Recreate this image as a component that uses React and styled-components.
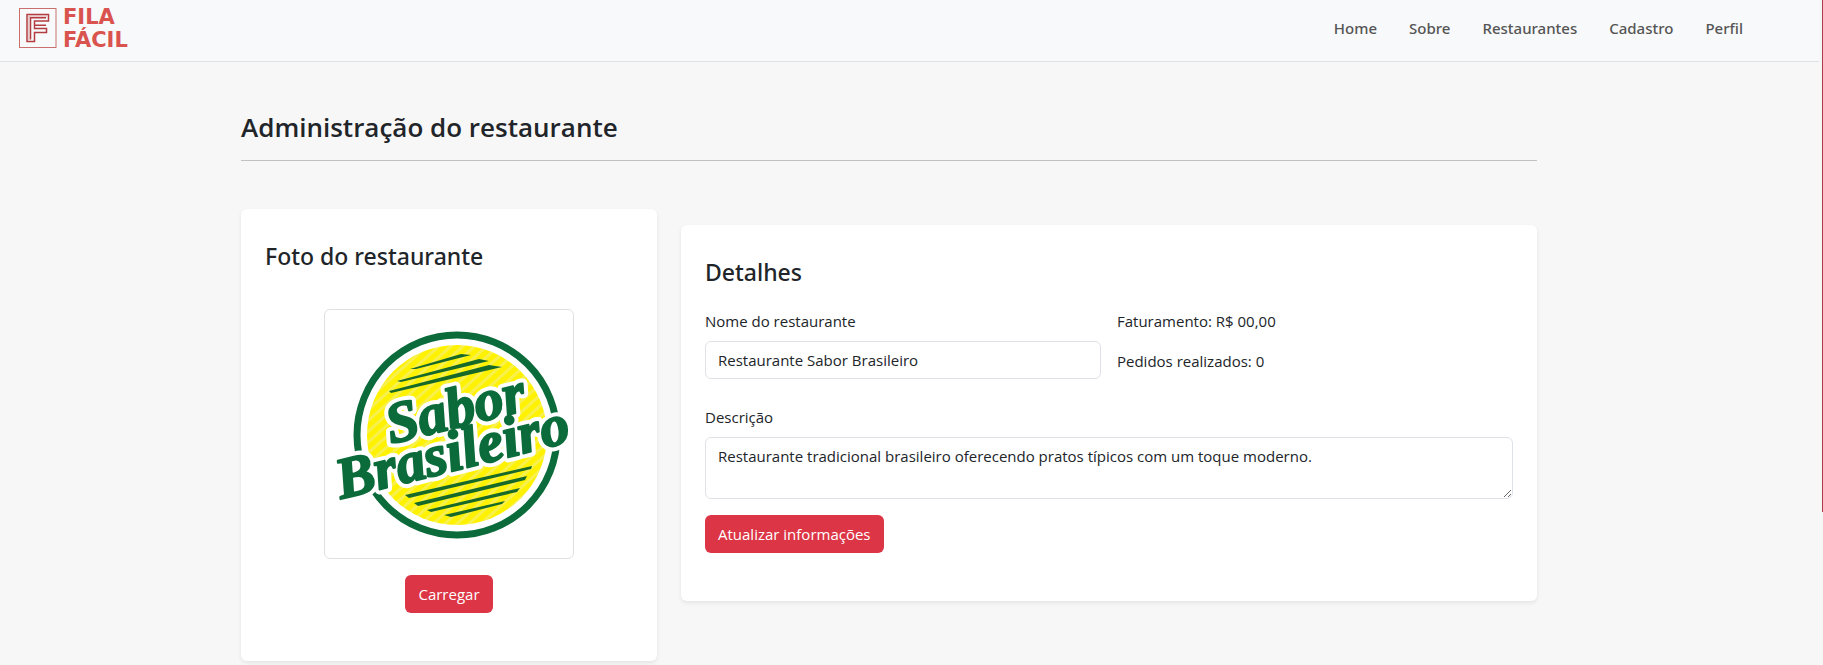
import React from "react";
import styled, { createGlobalStyle } from "styled-components";

const GlobalStyle = createGlobalStyle`
  *, *::before, *::after { box-sizing: border-box; }
  html { scrollbar-width: none; }
  body {
    margin: 0;
    background: #f7f7f7;
    color: #212529;
    font-family: "Open Sans", "Noto Sans", sans-serif;
    font-size: 15px;
    line-height: 24px;
  }
`;

const Page = styled.div`
  min-height: 100vh;
  padding-right: 4px;
`;

const ScrollThumb = styled.div`
  position: fixed;
  top: 0;
  right: 0;
  width: 1px;
  height: 77vh;
  background: #a83f48;
`;

const Header = styled.header`
  display: flex;
  align-items: flex-start;
  justify-content: space-between;
  height: 62px;
  padding: 8px 76px 0 19px;
  background: #f8f9fb;
  border-bottom: 1px solid #dee2e6;
`;

const Brand = styled.a`
  display: flex;
  gap: 6px;
  color: #d9534f;
  text-decoration: none;
`;

const BrandName = styled.span`
  display: flex;
  flex-direction: column;
  font-family: "DejaVu Sans", sans-serif;
  font-size: 21px;
  font-weight: 700;
  line-height: 23px;
  margin-top: -2px;
`;

const Nav = styled.nav`
  display: flex;
  gap: 32px;
  padding-top: 8px;
`;

const NavLink = styled.a`
  color: #555;
  font-family: "Noto Sans", sans-serif;
  font-weight: 500;
  text-decoration: none;
`;

const Main = styled.main`
  padding: 47px 41px 4px 0;
`;

const Container = styled.div`
  max-width: 1296px;
  margin: 0 auto;
`;

const PageTitle = styled.h1`
  margin: 0 0 48px;
  padding-bottom: 15px;
  border-bottom: 1px solid #c0c1c2;
  font-size: 26px;
  font-weight: 600;
  line-height: 36px;
`;

const Columns = styled.div`
  display: grid;
  grid-template-columns: repeat(12, 1fr);
  gap: 24px;
  align-items: start;
`;

const Card = styled.section`
  grid-column: span ${(p) => p.$span};
  margin-top: ${(p) => p.$top || 0}px;
  padding: 32px 24px 48px;
  background: #fff;
  border-radius: 6px;
  box-shadow: 0 2px 4px rgba(0, 0, 0, 0.08);
`;

const CardTitle = styled.h2`
  margin: 0 0 ${(p) => p.$gap}px;
  font-family: "Noto Sans", sans-serif;
  font-size: 23px;
  font-weight: 500;
  line-height: 30px;
`;

const PhotoArea = styled.div`
  display: flex;
  flex-direction: column;
  align-items: center;
  gap: 16px;
`;

const Thumbnail = styled.div`
  width: 250px;
  height: 250px;
  padding: 4px;
  border: 1px solid #e2dfe3;
  border-radius: 6px;

  svg {
    display: block;
    overflow: visible;
  }
`;

const Button = styled.button`
  height: 38px;
  padding: 0 13px;
  border: 0;
  border-radius: 6px;
  background: #dc3545;
  color: #fff;
  font: inherit;
`;

const Form = styled.form`
  display: grid;
  grid-template-columns: 1fr 1fr;
  column-gap: 16px;
  row-gap: 16px;
`;

const Field = styled.div`
  display: flex;
  flex-direction: column;
  gap: 8px;
  grid-column: ${(p) => (p.$wide ? "1 / -1" : "auto")};
  padding-top: ${(p) => (p.$wide ? 10 : 0)}px;
`;

const Input = styled.input`
  width: 100%;
  height: 38px;
  padding: 0 12px;
  border: 1px solid #dee2e6;
  border-radius: 6px;
  background: #fff;
  color: inherit;
  font: inherit;
`;

const TextArea = styled.textarea`
  display: block;
  width: 100%;
  height: 62px;
  padding: 6px 12px;
  border: 1px solid #dee2e6;
  border-radius: 6px;
  background: #fff;
  color: inherit;
  font: inherit;
  resize: vertical;
`;

const Stats = styled.div`
  display: flex;
  flex-direction: column;
  gap: 16px;
`;

const Stat = styled.p`
  margin: 0;
`;

const Actions = styled.div`
  grid-column: 1 / -1;
`;

const LogoWord = styled.text`
  font-family: "Liberation Serif", serif;
  font-size: 58px;
  font-weight: 700;
  font-style: italic;
  stroke-linejoin: round;
`;

function BrandMark() {
  return (
    <svg width="38" height="40" viewBox="0 0 38 40" fill="none" aria-hidden="true">
      <rect x="0.5" y="0.5" width="36.5" height="39" stroke="#c9706f" />
      <g stroke="#b23c40" strokeWidth="1.5">
        <path d="M8 6.5H29.5V13H15.5V20.5H27.5V24.5H15.5V33.5H8Z" />
        <path d="M11.5 31.5V9.7H27M15.5 17.2H27" />
      </g>
      <path d="M10 32V8H28" stroke="#dba3a3" />
    </svg>
  );
}

function RestaurantLogo() {
  return (
    <svg width="240" height="240" viewBox="0 0 240 240" role="img" aria-label="Sabor Brasileiro">
      <defs>
        <pattern id="hatch" width="8" height="8" patternUnits="userSpaceOnUse" patternTransform="rotate(-42)">
          <rect width="8" height="8" fill="#fff200" />
          <rect width="8" height="3" fill="#f8f04c" />
        </pattern>
      </defs>
      <circle cx="128" cy="121" r="100" fill="#fff" stroke="#0b6b3a" strokeWidth="7" />
      <circle cx="128" cy="121" r="90" fill="url(#hatch)" />
      <g fill="#17692a">
        <path d="M81 55L132 40L142 41L87 55Z" />
        <path d="M68 67L150 45L160 47L72 68Z" />
        <path d="M60 77L160 51L173 53L62 79Z" />
        <path d="M76 181L203 152L202 155L80 184Z" />
        <path d="M85 189L198 162L196 166L89 192Z" />
        <path d="M98 196L191 174L188 178L102 198Z" />
        <path d="M115 201L176 187L173 190L122 203Z" />
      </g>
      <use href="#logo-words" fill="#fff" stroke="#fff" strokeWidth="10" />
      <g fill="#0b6b3a" stroke="#0b6b3a" strokeWidth="2">
        <g id="logo-words">
          <LogoWord x="62" y="130" transform="rotate(-14 62 130)">Sabor</LogoWord>
          <LogoWord x="12" y="185" transform="rotate(-14 12 185)">Brasileiro</LogoWord>
        </g>
      </g>
    </svg>
  );
}

const links = ["Home", "Sobre", "Restaurantes", "Cadastro", "Perfil"];

export default function App() {
  return (
    <Page>
      <GlobalStyle />
      <Header>
        <Brand href="#home">
          <BrandMark />
          <BrandName>
            <span>FILA</span>
            <span>FÁCIL</span>
          </BrandName>
        </Brand>
        <Nav>
          {links.map((label) => (
            <NavLink key={label} href={`#${label.toLowerCase()}`}>{label}</NavLink>
          ))}
        </Nav>
      </Header>
      <Main>
        <Container>
          <PageTitle>Administração do restaurante</PageTitle>
          <Columns>
            <Card $span={4}>
              <CardTitle $gap={38}>Foto do restaurante</CardTitle>
              <PhotoArea>
                <Thumbnail><RestaurantLogo /></Thumbnail>
                <Button type="button">Carregar</Button>
              </PhotoArea>
            </Card>
            <Card $span={8} $top={16}>
              <CardTitle $gap={22}>Detalhes</CardTitle>
              <Form onSubmit={(e) => e.preventDefault()}>
                <Field>
                  <label htmlFor="nome">Nome do restaurante</label>
                  <Input id="nome" defaultValue="Restaurante Sabor Brasileiro" />
                </Field>
                <Stats>
                  <Stat>Faturamento: R$ 00,00</Stat>
                  <Stat>Pedidos realizados: 0</Stat>
                </Stats>
                <Field $wide>
                  <label htmlFor="descricao">Descrição</label>
                  <TextArea
                    id="descricao"
                    defaultValue="Restaurante tradicional brasileiro oferecendo pratos típicos com um toque moderno."
                  />
                </Field>
                <Actions>
                  <Button type="submit">Atualizar informações</Button>
                </Actions>
              </Form>
            </Card>
          </Columns>
        </Container>
      </Main>
      <ScrollThumb />
    </Page>
  );
}
